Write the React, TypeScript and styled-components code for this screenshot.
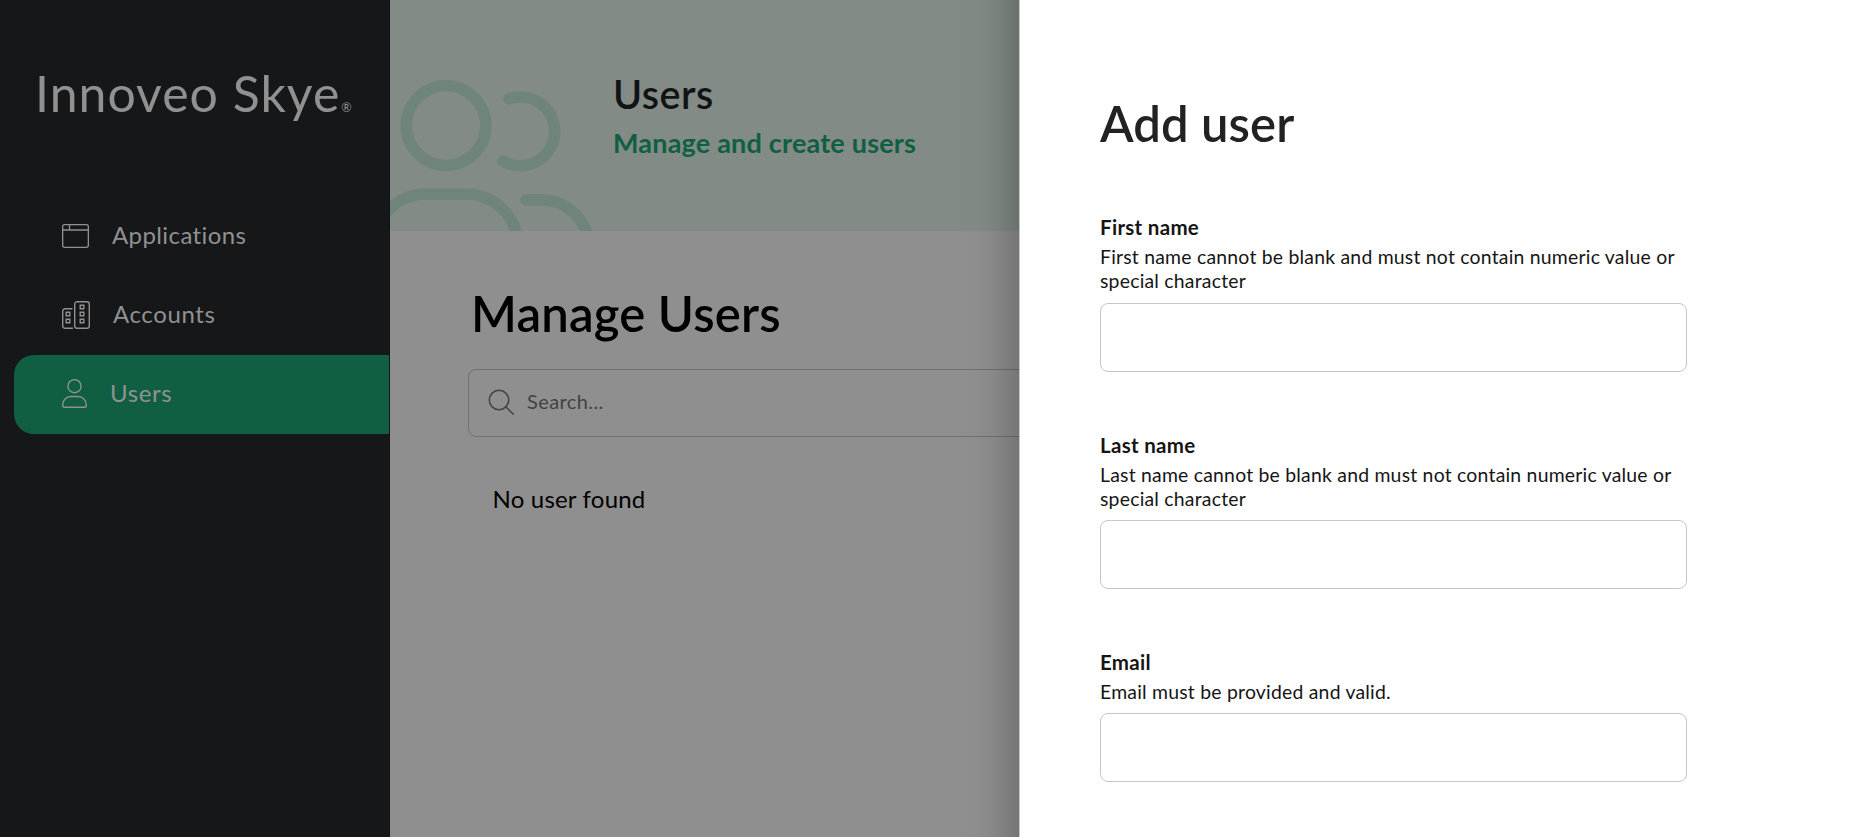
import React from "react";
import styled, { createGlobalStyle } from "styled-components";

const GlobalStyle = createGlobalStyle`
  *, *::before, *::after { box-sizing: border-box; }
  body {
    margin: 0;
    overflow: hidden;
    font-family: Lato, "Open Sans", sans-serif;
    font-weight: 400;
    font-variant-ligatures: none;
  }
  h1, h2, p { margin: 0; }
`;

const Page = styled.div`
  position: relative;
  display: flex;
  width: 100vw;
  height: 100vh;
  overflow: hidden;
  background: #8f8f8f;
`;

const Sidebar = styled.aside`
  flex: 0 0 390px;
  padding-top: 63px;
  background: #161719;
  border-right: 1px solid #111214;
  color: #919191;
`;

const Logo = styled.div`
  display: flex;
  align-items: baseline;
  height: 60px;
  padding-left: 35px;
  font-size: 50px;
  line-height: 60px;
  letter-spacing: 1px;
  white-space: nowrap;
`;

const Registered = styled.span`
  margin-left: 1px;
  font-size: 12.5px;
  line-height: 12px;
  letter-spacing: 0;
`;

const Nav = styled.nav`
  display: flex;
  flex-direction: column;
  margin-top: 74px;
  padding-left: 14px;
`;

const NavItem = styled.a<{ $active?: boolean }>`
  display: flex;
  align-items: center;
  gap: 22px;
  height: 79px;
  padding: 0 0 2px 48px;
  border-radius: 20px 0 0 20px;
  background: ${(p) => (p.$active ? "#115f42" : "transparent")};
`;

const NavLabel = styled.span<{ $spacing: number }>`
  margin: 0 0 1px 1px;
  font-size: 24px;
  line-height: 30px;
  letter-spacing: ${(p) => p.$spacing}px;
`;

const Main = styled.main`
  flex: 1;
  min-width: 0;
`;

const Banner = styled.header`
  display: flex;
  height: 231px;
  background: #828b86;
`;

const BannerText = styled.div`
  display: flex;
  flex-direction: column;
  gap: 9px;
  padding: 70px 0 0 13px;
`;

const BannerTitle = styled.h2`
  font-size: 39.5px;
  font-weight: 600;
  line-height: 48px;
  letter-spacing: 0.5px;
  color: #121315;
`;

const BannerSubtitle = styled.p`
  font-size: 27px;
  font-weight: 700;
  line-height: 32px;
  letter-spacing: 0.2px;
  color: #115f42;
`;

const Content = styled.section`
  padding: 53px 78px 0;
`;

const PageTitle = styled.h1`
  padding-left: 3px;
  font-size: 49px;
  font-weight: 600;
  line-height: 58px;
  letter-spacing: 0.2px;
  color: #000;
`;

const SearchBox = styled.div`
  display: flex;
  align-items: center;
  gap: 12px;
  height: 68px;
  margin-top: 27px;
  padding-left: 19px;
  border: 1px solid #717171;
  border-radius: 8px;
  color: #434343;
`;

const Placeholder = styled.span`
  margin-bottom: 4px;
  font-size: 20px;
  line-height: 24px;
  letter-spacing: 0.4px;
`;

const Empty = styled.p`
  margin: 47px 0 0 24.5px;
  font-size: 24px;
  line-height: 30px;
  letter-spacing: 0.2px;
  color: #000;
`;

/* Runs past both window edges so that its shadow stays even along the side. */
const Drawer = styled.aside`
  position: absolute;
  top: -60px;
  right: 0;
  bottom: -60px;
  width: 831px;
  padding: 154px 0 0 80px;
  overflow: hidden;
  border-left: 1px solid #c8c8c8;
  background: #fff;
  box-shadow: 0 0 48px rgba(0, 0, 0, 0.36);
`;

const DrawerTitle = styled.h2`
  margin-bottom: 63px;
  font-size: 49px;
  font-weight: 600;
  line-height: 58px;
  letter-spacing: 0.1px;
  color: #222;
`;

const Field = styled.label`
  display: block;
  width: 587px;
  margin-bottom: 61px;
  color: #151515;
`;

const FieldLabel = styled.span`
  display: block;
  margin-bottom: 6px;
  font-size: 20.5px;
  font-weight: 700;
  line-height: 24px;
  letter-spacing: 0.3px;
`;

const Hint = styled.span`
  display: block;
  margin-bottom: 9px;
  font-size: 19.4px;
  line-height: 24.3px;
  letter-spacing: 0.22px;
`;

const Input = styled.input`
  display: block;
  width: 100%;
  height: 69px;
  border: 1px solid #c6c6c6;
  border-radius: 8px;
  background: #fff;
`;

const WindowIcon = () => (
  <svg width="27" height="24" viewBox="0 0 27 24" fill="none" stroke="currentColor" strokeWidth="1.3">
    <rect x=".65" y=".65" width="25.7" height="22.7" rx="2" />
    <path d="M.65 6h25.7M7.5.65V6" />
  </svg>
);

const BuildingsIcon = () => (
  <svg width="28" height="28" viewBox="0 0 28 28" fill="none" stroke="currentColor" strokeWidth="1.4">
    <path d="M10.5 7.7H3A2.3 2.3 0 0 0 .7 10v15A2.3 2.3 0 0 0 3 27.3h8" />
    <rect x="12.7" y=".7" width="14.6" height="26.6" rx="2.3" />
    <path d="M4.2 11.2h3.6v3.6H4.2zM4.2 18.2h3.6v3.6H4.2zM18.2 4.2h3.6v3.6h-3.6zM18.2 11.2h3.6v3.6h-3.6zM18.2 18.2h3.6v3.6h-3.6z" />
  </svg>
);

const PersonIcon = () => (
  <svg width="25" height="29" viewBox="0 0 25 29" fill="none" stroke="currentColor" strokeWidth="1.4">
    <circle cx="12.5" cy="7.2" r="6.6" />
    <path d="M.7 26.5v-.8a8.2 8.2 0 0 1 8.2-8.2h7.2a8.2 8.2 0 0 1 8.2 8.2v.8q0 1.8-1.8 1.8h-20q-1.8 0-1.8-1.8Z" />
  </svg>
);

const SearchIcon = () => (
  <svg width="27" height="29" viewBox="0 0 27 29" fill="none" stroke="currentColor" strokeWidth="1.5" strokeLinecap="round">
    <circle cx="11" cy="11" r="9.7" />
    <path d="m17.8 17.8 7.5 7.5" />
  </svg>
);

const PeopleArt = () => (
  <svg width="210" height="231" viewBox="390 0 210 231" fill="none" stroke="#6f857b" strokeWidth="11.5" strokeLinecap="round">
    <circle cx="446" cy="125.6" r="39.8" />
    <path d="M508.7 98.9A34.4 34.4 0 1 1 503 161" />
    <path d="M374 246a52 52 0 0 1 52-52h40a52 52 0 0 1 52 52" />
    <path d="M526 199.8h15a48 48 0 0 1 48 48" />
  </svg>
);

const navItems = [
  { label: "Applications", Icon: WindowIcon, spacing: 0.4, active: false },
  { label: "Accounts", Icon: BuildingsIcon, spacing: 0.6, active: false },
  { label: "Users", Icon: PersonIcon, spacing: 0.6, active: true },
];

const fields = [
  { label: "First name", hint: "First name cannot be blank and must not contain numeric value or special character" },
  { label: "Last name", hint: "Last name cannot be blank and must not contain numeric value or special character" },
  { label: "Email", hint: "Email must be provided and valid." },
];

export default function App() {
  return (
    <Page>
      <GlobalStyle />
      <Sidebar>
        <Logo>
          Innoveo Skye<Registered>®</Registered>
        </Logo>
        <Nav>
          {navItems.map(({ label, Icon, spacing, active }) => (
            <NavItem key={label} $active={active}>
              <Icon />
              <NavLabel $spacing={spacing}>{label}</NavLabel>
            </NavItem>
          ))}
        </Nav>
      </Sidebar>
      <Main>
        <Banner>
          <PeopleArt />
          <BannerText>
            <BannerTitle>Users</BannerTitle>
            <BannerSubtitle>Manage and create users</BannerSubtitle>
          </BannerText>
        </Banner>
        <Content>
          <PageTitle>Manage Users</PageTitle>
          <SearchBox>
            <SearchIcon />
            <Placeholder>Search...</Placeholder>
          </SearchBox>
          <Empty>No user found</Empty>
        </Content>
      </Main>
      <Drawer>
        <DrawerTitle>Add user</DrawerTitle>
        {fields.map(({ label, hint }) => (
          <Field key={label}>
            <FieldLabel>{label}</FieldLabel>
            <Hint>{hint}</Hint>
            <Input />
          </Field>
        ))}
      </Drawer>
    </Page>
  );
}
